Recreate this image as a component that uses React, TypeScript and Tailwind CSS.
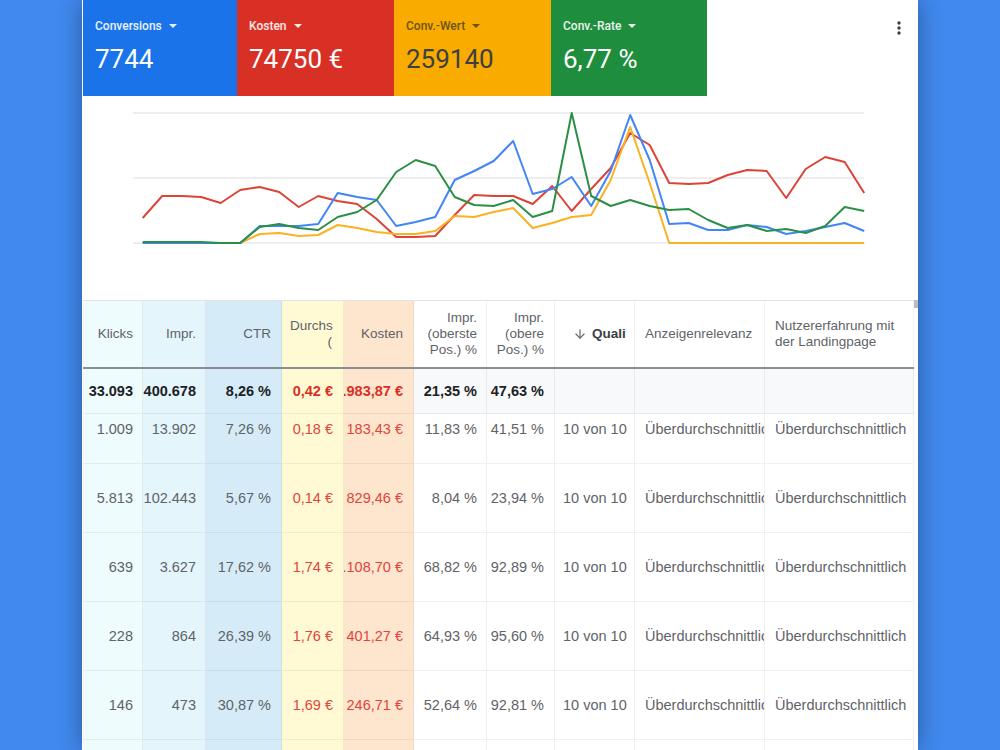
import { ArrowDown } from "lucide-react";

type Card = { label: string; value: string; box: string; labelCls: string };

const cards: Card[] = [
  { label: "Conversions", value: "7744", box: "w-[154px] bg-[#1a73e8] text-white", labelCls: "text-white/90" },
  { label: "Kosten", value: "74750 €", box: "w-[157px] bg-[#d93025] text-white", labelCls: "text-white/90" },
  { label: "Conv.-Wert", value: "259140", box: "w-[157px] bg-[#f9ab00] text-[#3c4043]", labelCls: "text-[#6b5417]" },
  { label: "Conv.-Rate", value: "6,77 %", box: "w-[156px] bg-[#1e8e3e] text-white", labelCls: "text-white/90" },
];

// y values per day (page coords), one point every 19.5px
const series = [
  {
    color: "#db4437",
    ys: [218, 196, 196, 197, 203, 190, 187, 192, 207, 196, 201, 204, 219, 237, 237, 236, 215, 195, 196, 196, 204, 186, 211, 189, 168, 133, 145, 183, 184, 183, 175, 170, 171, 198, 169, 157, 162, 193],
  },
  {
    color: "#fbb122",
    ys: [243, 243, 243, 243, 243, 243, 234, 233, 236, 235, 225, 228, 232, 234, 234, 231, 216, 217, 212, 208, 228, 223, 217, 215, 180, 127, 183, 243, 243, 243, 243, 243, 243, 243, 243, 243, 243, 243],
  },
  {
    color: "#4285f4",
    ys: [243, 243, 243, 243, 243, 243, 226, 226, 226, 224, 193, 197, 200, 226, 222, 217, 180, 171, 161, 141, 194, 189, 177, 206, 171, 115, 160, 224, 223, 230, 230, 225, 227, 234, 231, 227, 223, 231],
  },
  {
    color: "#2b8f45",
    ys: [242, 242, 242, 242, 243, 243, 227, 224, 228, 230, 217, 212, 200, 172, 160, 166, 197, 205, 206, 200, 217, 211, 113, 196, 206, 200, 206, 210, 209, 220, 228, 225, 231, 229, 233, 226, 207, 211],
  },
];

const toPoints = (ys: number[]) =>
  ys.map((y, i) => `${(60.7 + 19.5 * i).toFixed(1)},${y - 96}`).join(" ");

type Col = { bg: string; pad: string; right: boolean; red?: boolean };

const cols: Col[] = [
  { bg: "bg-[#eefcfd]", pad: "pr-[9px]", right: true },
  { bg: "bg-[#e4f5fc]", pad: "pr-[9px]", right: true },
  { bg: "bg-[#d5ecf8]", pad: "pr-[10px]", right: true },
  { bg: "bg-[#fffad4]", pad: "pr-[10px]", right: true, red: true },
  { bg: "bg-[#fde6cd]", pad: "pr-[10px]", right: true, red: true },
  { bg: "", pad: "pr-[9px]", right: true },
  { bg: "", pad: "pr-[10px]", right: true },
  { bg: "", pad: "pl-[8px]", right: false },
  { bg: "", pad: "pl-[10px]", right: false },
  { bg: "", pad: "pl-[10px]", right: false },
];

const gridCols = "grid grid-cols-[60px_63px_76px_62px_70px_73px_68px_80px_130px_149px]";

const total = ["33.093", "400.678", "8,26 %", "0,42 €", "11.983,87 €", "21,35 %", "47,63 %", "", "", ""];

const rows = [
  ["1.009", "13.902", "7,26 %", "0,18 €", "183,43 €", "11,83 %", "41,51 %", "10 von 10", "Überdurchschnittlich", "Überdurchschnittlich"],
  ["5.813", "102.443", "5,67 %", "0,14 €", "829,46 €", "8,04 %", "23,94 %", "10 von 10", "Überdurchschnittlich", "Überdurchschnittlich"],
  ["639", "3.627", "17,62 %", "1,74 €", "1.108,70 €", "68,82 %", "92,89 %", "10 von 10", "Überdurchschnittlich", "Überdurchschnittlich"],
  ["228", "864", "26,39 %", "1,76 €", "401,27 €", "64,93 %", "95,60 %", "10 von 10", "Überdurchschnittlich", "Überdurchschnittlich"],
  ["146", "473", "30,87 %", "1,69 €", "246,71 €", "52,64 %", "92,81 %", "10 von 10", "Überdurchschnittlich", "Überdurchschnittlich"],
  ["", "", "", "", "", "", "", "", "", ""],
];

const Caret = () => (
  <svg width="8" height="4" viewBox="0 0 8 4" className="ml-[7px] fill-current">
    <path d="M0 0h8L4 4z" />
  </svg>
);

const Scorecards = () => (
  <div className="flex h-[96px]">
    <div className="flex pl-[1px]">
      {cards.map((c) => (
        <div key={c.label} className={`${c.box} h-[96px] pl-[12px] pt-[19px]`}>
          <div className={`flex items-center text-[12px] leading-[14px] font-medium ${c.labelCls}`}>
            {c.label}
            <Caret />
          </div>
          <div className="mt-[11px] text-[26px] leading-[30px]">{c.value}</div>
        </div>
      ))}
    </div>
    <div className="flex-1 flex justify-end pt-[20px] pr-[17px]">
      <svg width="4" height="16" viewBox="0 0 4 16" className="fill-[#3c4043]">
        <circle cx="2" cy="3" r="1.7" />
        <circle cx="2" cy="8" r="1.7" />
        <circle cx="2" cy="13" r="1.7" />
      </svg>
    </div>
  </div>
);

const Chart = () => (
  <div className="h-[204px]">
    <svg width="836" height="204" viewBox="0 0 836 204">
      {[17, 82, 147].map((y) => (
        <line key={y} x1="51" x2="782" y1={y} y2={y} stroke="#e8e8e8" strokeWidth="1.5" />
      ))}
      {series.map((s) => (
        <polyline
          key={s.color}
          points={toPoints(s.ys)}
          fill="none"
          stroke={s.color}
          strokeWidth="2"
          strokeLinejoin="round"
        />
      ))}
    </svg>
  </div>
);

const HeaderRow = () => {
  const cell = (i: number) =>
    `${cols[i].bg || "bg-white"} ${cols[i].pad} h-full border-r border-black/[0.06] flex items-center overflow-hidden`;
  return (
    <div className={`${gridCols} h-[67px] border-t border-[#e3e3e3] text-[13.5px] leading-[16px] text-[#5f6368]`}>
      <div className={`${cell(0)} justify-end`}>Klicks</div>
      <div className={`${cell(1)} justify-end`}>Impr.</div>
      <div className={`${cell(2)} justify-end`}>CTR</div>
      <div className={`${cell(3)} pl-[8px]`}>
        <div className="w-full overflow-hidden">
          <div className="whitespace-nowrap">Durchschn.</div>
          <div className="text-right pr-[1px]">(</div>
        </div>
      </div>
      <div className={`${cell(4)} justify-end`}>Kosten</div>
      <div className={`${cell(5)} justify-end text-right`}>
        Impr.
        <br />
        (oberste
        <br />
        Pos.) %
      </div>
      <div className={`${cell(6)} justify-end text-right`}>
        Impr.
        <br />
        (obere
        <br />
        Pos.) %
      </div>
      <div className={`${cell(7)} pr-[8px]`}>
        <div className="flex items-center gap-[5px] pl-[10px] overflow-hidden whitespace-nowrap">
          <ArrowDown size={14} strokeWidth={2} className="shrink-0 text-[#5f6368]" />
          <span className="font-bold text-[#3c4043]">Qualitätsfaktor</span>
        </div>
      </div>
      <div className={`${cell(8)} whitespace-nowrap`}>Anzeigenrelevanz</div>
      <div className={cell(9)}>
        <div>
          Nutzererfahrung mit
          <br />
          der Landingpage
        </div>
      </div>
    </div>
  );
};

const DataRow = ({
  values,
  height,
  bold,
  rowBg,
  top,
}: {
  values: string[];
  height: string;
  bold?: boolean;
  rowBg: string;
  top?: boolean;
}) => (
  <div className={`${gridCols} ${height} text-[14.5px] leading-[16px]`}>
    {values.map((v, i) => {
      const c = cols[i];
      const color = c.red
        ? bold
          ? "text-[#d93025]"
          : "text-[#e0453b]"
        : bold
          ? "text-[#202124]"
          : "text-[#5f6368]";
      return (
        <div
          key={i}
          className={`${c.bg || rowBg} ${c.pad} ${color} ${bold ? "font-bold" : ""} ${
            top ? "items-start pt-[7px]" : "items-center"
          } ${c.right ? "justify-end" : "justify-start"} flex h-full overflow-hidden whitespace-nowrap border-r border-b border-black/[0.06]`}
        >
          <span className="shrink-0">{v}</span>
        </div>
      );
    })}
  </div>
);

export default function App() {
  return (
    <div className="h-[750px] overflow-hidden bg-[#4189ee] flex justify-center font-['Liberation_Sans',Arial,sans-serif]">
      <div className="w-[836px] h-full bg-white shadow-[0_0_22px_rgba(0,0,0,0.35)] flex flex-col">
        <div className="font-['Roboto',Arial,sans-serif]">
          <Scorecards />
        </div>
        <Chart />
        <div className="flex">
          <div className="ml-[1px] w-[831px]">
            <HeaderRow />
            <div className="h-[2px] bg-[#8a8d91]" />
            <DataRow values={total} height="h-[45px]" bold rowBg="bg-[#f8f9fa]" />
            <DataRow values={rows[0]} height="h-[50px]" rowBg="bg-white" top />
            {rows.slice(1).map((r, i) => (
              <DataRow key={i} values={r} height="h-[69px]" rowBg="bg-white" />
            ))}
          </div>
          <div className="w-[4px]">
            <div className="h-[8px] bg-[#bdbdbd]" />
          </div>
        </div>
      </div>
    </div>
  );
}
